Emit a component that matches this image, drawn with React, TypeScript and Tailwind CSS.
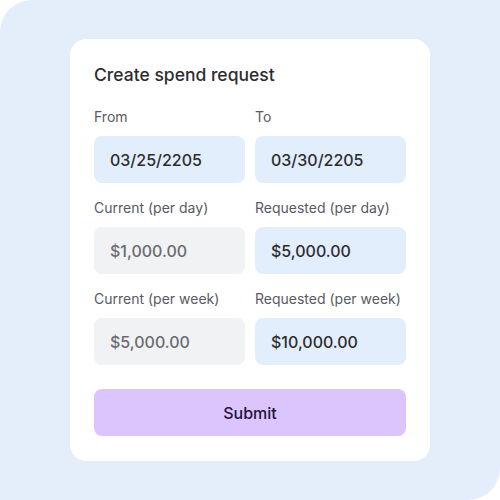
import React from 'react';

type Field = { label: string; value: string; disabled?: boolean };

const rows: Field[][] = [
  [
    { label: 'From', value: '03/25/2205' },
    { label: 'To', value: '03/30/2205' },
  ],
  [
    { label: 'Current (per day)', value: '$1,000.00', disabled: true },
    { label: 'Requested (per day)', value: '$5,000.00' },
  ],
  [
    { label: 'Current (per week)', value: '$5,000.00', disabled: true },
    { label: 'Requested (per week)', value: '$10,000.00' },
  ],
];

function FieldBox({ field }: { field: Field }) {
  return (
    <div className="flex flex-col">
      <label className="text-[14px] leading-5 text-[#5a5a5f]">{field.label}</label>
      {field.disabled ? (
        <div className="mt-[9px] h-[47px] flex items-center pl-4 rounded-lg bg-[#f1f2f4] bg-[radial-gradient(#e7e8eb_0.6px,transparent_0.7px)] bg-[length:4px_4px] text-[16px] font-medium text-[#6b6b70]">
          {field.value}
        </div>
      ) : (
        <div className="mt-[9px] h-[47px] flex items-center pl-4 rounded-lg bg-[#e3eefc] text-[16px] font-medium text-[#2c2c30]">
          {field.value}
        </div>
      )}
    </div>
  );
}

export default function App() {
  return (
    <div className="w-[500px] h-[500px] bg-white font-['Inter',sans-serif]">
      <div className="w-full h-full bg-[#e4eefb] rounded-tl-[32px] rounded-br-[32px] pt-[39px] pl-[70px]">
        <div className="w-[360px] bg-white rounded-2xl px-6 pt-6 pb-[25px]">
          <h1 className="text-[17.5px] leading-6 font-medium text-[#2d2d30]">Create spend request</h1>
          <div className="mt-5 flex flex-col gap-[15px]">
            {rows.map((row, i) => (
              <div key={i} className="grid grid-cols-2 gap-[10px]">
                {row.map((f) => (
                  <FieldBox key={f.label} field={f} />
                ))}
              </div>
            ))}
          </div>
          <button className="mt-6 w-full h-[47px] rounded-lg bg-[#dcc4fc] text-[16px] font-medium text-[#1c1240]">
            Submit
          </button>
        </div>
      </div>
    </div>
  );
}
